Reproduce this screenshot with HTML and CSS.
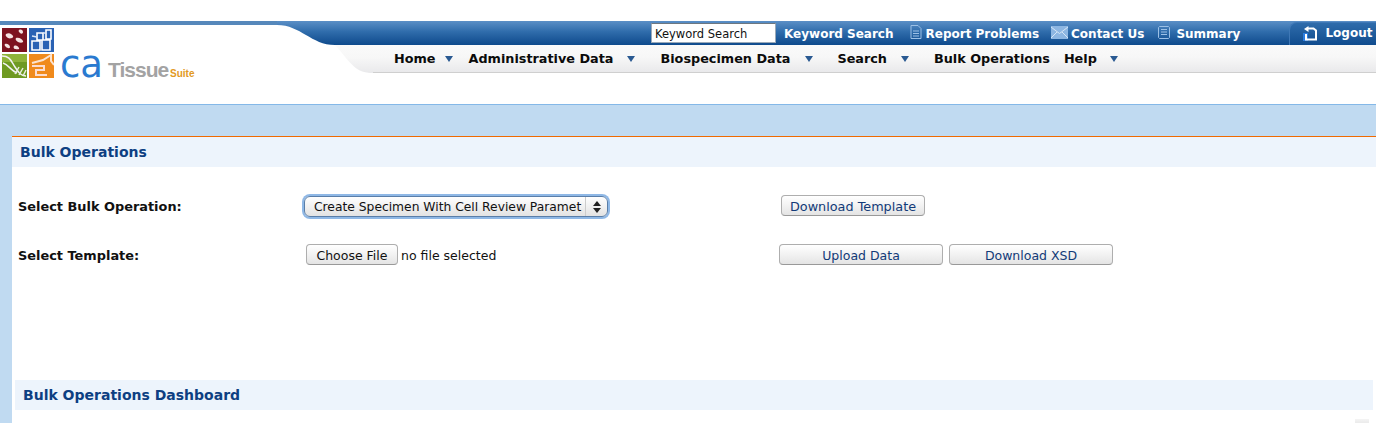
FILE: index.html
```html
<!DOCTYPE html>
<html lang="en">
<head>
<meta charset="utf-8" />
<title>caTissue Suite - Bulk Operations</title>
<link rel="stylesheet" href="styles.css">
</head>
<body>
  <header class="header">
    <div class="logo">
      <svg class="logo-mark" width="52" height="50" viewBox="0 0 52 50">
        <rect x="0" y="0" width="25" height="24" fill="#7d1220"/>
        <path d="M4 6c3-2 6 0 7 2s-3 3-5 2-3-3-2-4zM14 10c3-1 6 1 7 3s-3 2-5 1-3-3-2-4zM3 16c2-1 5 1 5 3s-3 1-4 0-2-2-1-3zM12 18c2-1 4 0 5 2s-3 1-4 1-2-2-1-3zM17 2c2-1 4 0 4 2s-2 2-3 1-2-2-1-3z" fill="#f5e2e2"/>
        <rect x="27" y="0" width="25" height="24" fill="#2a62b4"/>
        <path d="M30 13h8v9h-8zM40 12h8v10h-8zM35 5h6v7h-6zM44 2h5v9h-5z" fill="none" stroke="#fff" stroke-width="1.600"/>
        <path d="M30 8l5 1M41 5h3" stroke="#dbe7f7" stroke-width="1.500"/>
        <rect x="0" y="26" width="25" height="24" fill="#6f9a22"/>
        <rect x="0" y="26" width="25" height="8" fill="#8fb33a"/>
        <path d="M0 28c8 0 9 5 13 11s6 9 11 9M1 35c6 2 7 7 14 10" fill="none" stroke="#f2f2f2" stroke-width="1.500"/>
        <path d="M13 46l4-7M17 47l4-7M21 48l3-6" stroke="#e8eddc" stroke-width="1.500"/>
        <rect x="27" y="26" width="25" height="24" fill="#f08a1c"/>
        <path d="M30 35l11-3 8-5v6l3 4" fill="none" stroke="#fbe3d0" stroke-width="2"/>
        <path d="M30 38h12v4h-8v5h11" fill="none" stroke="#fbdcd0" stroke-width="2"/>
      </svg>
      <div class="logo-name">
        <span class="logo-ca">ca</span>
        <span class="logo-tissue">Tissue</span>
        <span class="logo-suite">Suite</span>
      </div>
    </div>

    <svg class="curve" width="103" height="52" viewBox="0 0 103 52">
      <defs>
        <linearGradient id="barGrad" x1="0" y1="0" x2="0" y2="1">
          <stop offset="0" stop-color="#5b8fc6"/>
          <stop offset="0.45" stop-color="#2f6cab"/>
          <stop offset="1" stop-color="#0e4a8c"/>
        </linearGradient>
        <linearGradient id="navGrad" x1="0" y1="0" x2="0" y2="1">
          <stop offset="0" stop-color="#fafafa"/>
          <stop offset="0.45" stop-color="#f7f7f7"/>
          <stop offset="1" stop-color="#e9e9eb"/>
        </linearGradient>
      </defs>
      <rect x="0" y="0" width="103" height="4" fill="#5688bb"/>
      <path d="M0 4C24 4 34 24 58 24H103V0H0Z" fill="url(#barGrad)"/>
      <path d="M58 24H103V52H96C78 52 74 42 58 24Z" fill="url(#navGrad)"/>
      <path d="M96 51.500H103" stroke="#cfcfcf"/>
    </svg>

    <div class="bars">
      <div class="topbar">
        <input class="keyword" type="text" value="Keyword Search">
        <a class="top-link top-link-first">Keyword Search</a>
        <svg class="top-icon" width="12" height="14" viewBox="0 0 12 14">
          <path d="M1 .5h7l3 3v10H1zM3 6h6M3 8.500h6M3 11h6" fill="none" stroke="#9cc0e6"/>
        </svg>
        <a class="top-link">Report Problems</a>
        <svg class="top-icon top-icon-mail" width="17" height="13" viewBox="0 0 17 13">
          <rect x="0" y="0" width="17" height="13" fill="#8db6e2"/>
          <path d="M0 1l8.500 6.500L17 1M0 12l6-6M17 12l-6-6" fill="none" stroke="#d5e5f5"/>
        </svg>
        <a class="top-link">Contact Us</a>
        <svg class="top-icon top-icon-sum" width="12" height="13" viewBox="0 0 12 13">
          <path d="M1.500.5h9l1 1v10l-1 1h-9l-1-1v-10zM3 3.500h6M3 6h6M3 8.500h6" fill="none" stroke="#9cc0e6"/>
        </svg>
        <a class="top-link">Summary</a>
        <div class="logout">
          <svg width="14" height="15" viewBox="0 0 14 15">
            <rect x="0" y="7" width="5" height="8" fill="#2b7de0"/>
            <path d="M5 2.500h5.500l2.500 2v9H3V8" fill="none" stroke="#fff" stroke-width="2"/>
            <path d="M1 3l4.500-3v6z" fill="#fff"/>
          </svg>
          <a class="logout-link">Logout</a>
        </div>
      </div>
      <nav class="navbar">
        <a class="nav-item nav-home">Home</a><i class="caret caret-home"></i>
        <a class="nav-item">Administrative Data</a><i class="caret caret-admin"></i>
        <a class="nav-item">Biospecimen Data</a><i class="caret caret-bio"></i>
        <a class="nav-item">Search</a><i class="caret caret-search"></i>
        <a class="nav-item">Bulk Operations</a>
        <a class="nav-item nav-help">Help</a><i class="caret caret-help"></i>
      </nav>
    </div>
  </header>

  <main class="band">
    <div class="panel">
      <h2 class="panel-title">Bulk Operations</h2>
      <div class="form-grid">
        <label class="field-label">Select Bulk Operation:</label>
        <div class="fake-select">
          <span class="fake-select-text">Create Specimen With Cell Review Paramet</span>
          <span class="fake-select-arrows">
            <i class="arrow-up"></i>
            <i class="arrow-down"></i>
          </span>
        </div>
        <div class="btn-row"><button class="btn btn-template" type="button">Download Template</button></div>

        <label class="field-label">Select Template:</label>
        <div class="file-pick">
          <button class="btn btn-file" type="button">Choose File</button>
          <span>no file selected</span>
        </div>
        <div class="btn-row">
          <button class="btn btn-wide" type="button">Upload Data</button>
          <button class="btn btn-wide" type="button">Download XSD</button>
        </div>
      </div>
      <h2 class="panel-title panel-title-dash">Bulk Operations Dashboard</h2>
      <div class="dash-tools"><span class="dash-icon"></span></div>
    </div>
  </main>
</body>
</html>
```

FILE: styles.css
```css
*{
  margin:0;
  padding:0;
  box-sizing:border-box;
}
html,body{
  height:423px;
  overflow:hidden;
}
body{
  background:white;
  font-family:"DejaVu Sans",Verdana,sans-serif;
  padding-top:21px;
}

/* header */
.header{
  display:flex;
  height:83px;
}
.logo{
  width:277px;
  height:52px;
  border-top:4px solid #5688bb;
  padding:3px 0 0 2px;
  display:flex;
}
.logo-mark{
  flex:none;
}
.logo-name{
  display:flex;
  align-items:baseline;
  height:50px;
  padding:24px 0 0 6px;
}
.logo-ca{
  font-family:"DejaVu Sans",sans-serif;
  font-size:37px;
  line-height:26px;
  color:#2a7ad0;
  width:48px;
}
.logo-tissue{
  font-family:"Liberation Sans",Arial,sans-serif;
  font-size:21px;
  line-height:26px;
  font-weight:bold;
  letter-spacing:-1px;
  color:#a3a3a3;
  width:62px;
}
.logo-suite{
  font-family:"Liberation Sans",Arial,sans-serif;
  font-size:10px;
  font-weight:bold;
  color:#e29a1e;
}
.curve{
  flex:none;
  display:block;
}
.bars{
  flex:1;
  min-width:0;
}
.topbar{
  height:24px;
  background:linear-gradient(#5b8fc6,#2f6cab 45%,#0e4a8c);
  display:flex;
  align-items:center;
  padding-left:271px;
}
.keyword{
  width:125px;
  height:20px;
  border:1px solid #9aa9b8;
  border-top-color:#6d7780;
  padding:1px 3px 0;
  font-family:"DejaVu Sans",sans-serif;
  font-size:11.500px;
  color:#111;
  background:white;
  outline:none;
}
.top-link{
  color:white;
  font-size:12px;
  font-weight:bold;
  white-space:nowrap;
  padding-top:1px;
}
.top-link-first{
  margin-left:8px;
}
.top-icon{
  flex:none;
  margin:0 4px 2px 16px;
}
.top-icon-mail{
  margin:0 3px 2px 12px;
}
.top-icon-sum{
  margin:0 6px 2px 14px;
}
.logout{
  margin-left:49px;
  flex:1;
  height:23px;
  align-self:flex-end;
  border:1px solid #3f78b6;
  border-bottom:0;
  border-right:0;
  border-radius:8px 0 0 0;
  background:linear-gradient(#2f6cab,#104c8e);
  display:flex;
  align-items:center;
  padding:0 0 2px 13px;
  gap:8px;
}
.logout-link{
  color:white;
  font-size:12px;
  font-weight:bold;
}
.navbar{
  height:28px;
  background:linear-gradient(#fafafa,#f7f7f7 45%,#e9e9eb);
  border-bottom:1px solid #cfcfcf;
  display:flex;
  align-items:center;
  padding-left:14px;
}
.nav-item{
  color:#0b0b0b;
  font-size:12.800px;
  font-weight:bold;
  white-space:nowrap;
}
.nav-help{
  margin-left:14px;
}
.caret{
  width:0;
  height:0;
  border-left:4px solid transparent;
  border-right:4px solid transparent;
  border-top:6px solid #2a5a92;
}
.caret-home{
  margin:0 16px 0 9px;
}
.caret-admin{
  margin:0 25px 0 14px;
}
.caret-bio{
  margin:0 24px 0 15px;
}
.caret-search{
  margin:0 25px 0 14px;
}
.caret-help{
  margin-left:13px;
}

/* content */
.band{
  height:319px;
  background:#c0daf1;
  border-top:1px solid #84b8e8;
  padding:31px 0 0 12px;
}
.panel{
  height:287px;
  background:white;
  border-top:1px solid #f06a00;
}
.panel-title{
  height:30px;
  line-height:30px;
  padding-left:8px;
  background:#edf4fc;
  color:#0d3f82;
  font-size:14px;
  font-weight:bold;
}
.panel-title-dash{
  margin:0 3px;
}
.form-grid{
  display:grid;
  grid-template-columns:286px 475px 1fr;
  grid-auto-rows:49px;
  align-items:center;
  padding:15px 0 0 6px;
  height:213px;
}
.field-label{
  color:#111;
  font-size:12.900px;
  font-weight:bold;
}
.fake-select{
  width:304px;
  height:21px;
  display:flex;
  align-items:center;
  border:1px solid #5a7ea8;
  border-radius:6px;
  background:linear-gradient(#fff,#f1f1f1 50%,#e2e2e2);
  box-shadow:0 0 0 2px #8fb8e6;
  font-size:12.300px;
  color:#111;
}
.fake-select-text{
  flex:1;
  padding-left:9px;
  white-space:nowrap;
  overflow:hidden;
}
.fake-select-arrows{
  width:22px;
  height:100%;
  border-left:1px solid #ccc;
  display:flex;
  flex-direction:column;
  align-items:center;
  justify-content:center;
  gap:2px;
}
.arrow-up,.arrow-down{
  width:0;
  height:0;
  border-left:4px solid transparent;
  border-right:4px solid transparent;
}
.arrow-up{
  border-bottom:5px solid #222;
}
.arrow-down{
  border-top:5px solid #222;
}
.btn{
  height:21px;
  padding-top:2px;
  border:1px solid #aeaeae;
  border-bottom-color:#999;
  border-radius:4px;
  background:linear-gradient(#fff,#f2f2f2 50%,#e4e4e4);
  font-family:"DejaVu Sans",sans-serif;
  font-size:12.500px;
  color:#123a78;
}
.btn-template{
  width:144px;
  margin-left:2px;
  font-size:12.800px;
}
.btn-file{
  width:92px;
  color:#111;
  margin-right:3px;
}
.btn-wide{
  width:164px;
}
.file-pick{
  display:flex;
  align-items:center;
  padding:0 0 2px 2px;
  font-size:12.500px;
  color:#111;
}
.file-pick span{
  padding-top:2px;
}
.btn-row{
  display:flex;
  gap:6px;
  padding-bottom:2px;
}
.dash-tools{
  display:flex;
  justify-content:flex-end;
  padding:9px 7px 0 0;
}
.dash-icon{
  width:14px;
  height:14px;
  background:linear-gradient(#f4f4f4,#d4d4d4);
}
```
